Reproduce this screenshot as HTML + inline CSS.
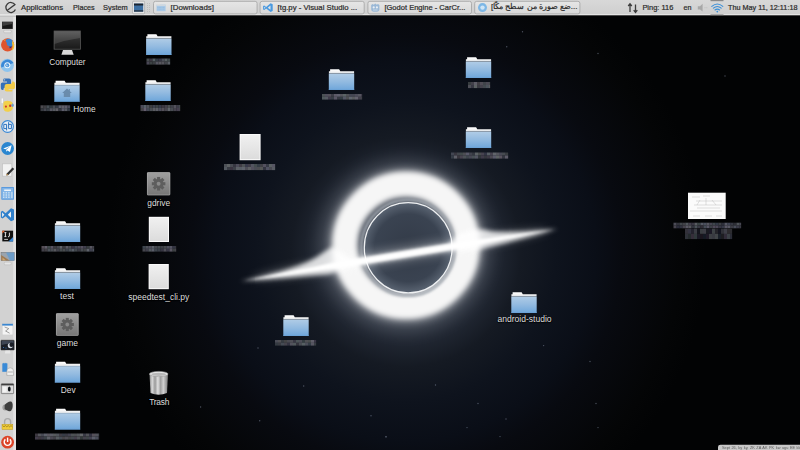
<!DOCTYPE html><html><head><meta charset="utf-8"><style>
html,body{margin:0;padding:0;width:800px;height:450px;overflow:hidden;background:#000;font-family:"Liberation Sans",sans-serif;}
svg{position:absolute;left:0;top:0;}
.t{position:absolute;white-space:nowrap;line-height:1;}
.pt{color:#2a2a2a;-webkit-text-stroke:0.2px #2a2a2a;}
.dl{color:#dedede;text-shadow:0 0 1px #000,0 1px 1px #000;}
</style></head><body>
<svg width="800" height="450" viewBox="0 0 800 450"><defs>
<radialGradient id="sky" cx="406" cy="252" r="300" gradientUnits="userSpaceOnUse">
<stop offset="0" stop-color="#3c4654"/>
<stop offset="0.233" stop-color="#2a313e"/>
<stop offset="0.383" stop-color="#151a23"/>
<stop offset="0.5" stop-color="#0e131d"/>
<stop offset="0.633" stop-color="#0a0e17"/>
<stop offset="0.717" stop-color="#080a10"/>
<stop offset="0.917" stop-color="#040506"/>
<stop offset="1" stop-color="#020304"/>
</radialGradient>
<radialGradient id="disc" cx="408.2" cy="247.8" r="45" gradientUnits="userSpaceOnUse">
<stop offset="0" stop-color="#333b48"/>
<stop offset="0.75" stop-color="#3a4351"/>
<stop offset="1" stop-color="#5a6472"/>
</radialGradient>
<linearGradient id="fold" x1="0" y1="0" x2="0" y2="1">
<stop offset="0" stop-color="#b0cce6"/>
<stop offset="0.5" stop-color="#92bae0"/>
<stop offset="1" stop-color="#6ea6da"/>
</linearGradient>
<linearGradient id="ftop" x1="0" y1="0" x2="0" y2="1">
<stop offset="0" stop-color="#ffffff"/>
<stop offset="0.6" stop-color="#f2f2f2"/>
<stop offset="1" stop-color="#d6dde4"/>
</linearGradient>
<linearGradient id="gear" x1="0" y1="0" x2="0" y2="1">
<stop offset="0" stop-color="#a0a0a0"/>
<stop offset="1" stop-color="#767676"/>
</linearGradient>
<linearGradient id="doc" x1="0" y1="0" x2="0" y2="1">
<stop offset="0" stop-color="#f0f0f0"/>
<stop offset="1" stop-color="#dcdcdc"/>
</linearGradient>
<linearGradient id="can" x1="0" y1="0" x2="1" y2="0">
<stop offset="0" stop-color="#8a8a8a"/>
<stop offset="0.15" stop-color="#d8d8d8"/>
<stop offset="0.3" stop-color="#9a9a9a"/>
<stop offset="0.45" stop-color="#e0e0e0"/>
<stop offset="0.6" stop-color="#a0a0a0"/>
<stop offset="0.75" stop-color="#d0d0d0"/>
<stop offset="1" stop-color="#7a7a7a"/>
</linearGradient>
<linearGradient id="scr" x1="0" y1="0" x2="0" y2="1">
<stop offset="0" stop-color="#4a4a4a"/>
<stop offset="0.5" stop-color="#2c2c2c"/>
<stop offset="1" stop-color="#1a1a1a"/>
</linearGradient>
<filter id="b1" x="-50%" y="-50%" width="200%" height="200%"><feGaussianBlur stdDeviation="1"/></filter>
<filter id="b2" x="-50%" y="-50%" width="200%" height="200%"><feGaussianBlur stdDeviation="2"/></filter>
<filter id="b25" x="-50%" y="-50%" width="200%" height="200%"><feGaussianBlur stdDeviation="2.5"/></filter>
<filter id="b3" x="-50%" y="-50%" width="200%" height="200%"><feGaussianBlur stdDeviation="3"/></filter>
<filter id="b4" x="-50%" y="-50%" width="200%" height="200%"><feGaussianBlur stdDeviation="4"/></filter>
<filter id="b8" x="-50%" y="-50%" width="200%" height="200%"><feGaussianBlur stdDeviation="8"/></filter>
<filter id="b16" x="-50%" y="-50%" width="200%" height="200%"><feGaussianBlur stdDeviation="16"/></filter>
<symbol id="folder" viewBox="0 0 26 21" overflow="visible">
<path d="M1.6 0.2 H10.6 L11.8 2.2 H25.6 V4.6 H0.4 V2.2 H1.6 Z" fill="url(#ftop)"/>
<rect x="0.3" y="4.6" width="25.4" height="16.4" fill="url(#fold)"/>
<rect x="0.3" y="20.4" width="25.4" height="0.6" fill="#6aa0d6"/>
</symbol>
<symbol id="gearico" viewBox="0 0 24 24" overflow="visible">
<rect x="0" y="0" width="24" height="24" rx="1" fill="url(#gear)"/>
<rect x="0.4" y="0.4" width="23.2" height="23.2" rx="1" fill="none" stroke="#b8b8b8" stroke-width="0.6" opacity="0.8"/>
<g transform="translate(12 12)" fill="#5e5e5e">
<circle r="5"/>
<rect x="-1.6" y="-7" width="3.2" height="14"/>
<rect x="-1.6" y="-7" width="3.2" height="14" transform="rotate(45)"/>
<rect x="-1.6" y="-7" width="3.2" height="14" transform="rotate(90)"/>
<rect x="-1.6" y="-7" width="3.2" height="14" transform="rotate(135)"/>
<circle r="2" fill="#8a8a8a"/>
</g>
</symbol>
<symbol id="docico" viewBox="0 0 20 25" overflow="visible">
<rect x="0" y="0" width="20.2" height="25.2" fill="#fafafa"/>
<rect x="1" y="1" width="18.2" height="23.2" fill="url(#doc)"/>
</symbol>
</defs><rect width="800" height="450" fill="url(#sky)"/><circle cx="478" cy="403.5" r="0.7" fill="#8f9ab0" opacity="0.5"/><circle cx="467" cy="427.6" r="0.7" fill="#8f9ab0" opacity="0.5"/><circle cx="506" cy="419" r="0.7" fill="#8f9ab0" opacity="0.5"/><circle cx="590" cy="361.5" r="0.7" fill="#8f9ab0" opacity="0.5"/><circle cx="435.5" cy="385" r="0.7" fill="#8f9ab0" opacity="0.5"/><circle cx="386" cy="436.6" r="0.7" fill="#8f9ab0" opacity="0.5"/><circle cx="500" cy="436.6" r="0.7" fill="#8f9ab0" opacity="0.5"/><circle cx="598" cy="427.6" r="0.7" fill="#8f9ab0" opacity="0.5"/><circle cx="543.6" cy="345.6" r="0.7" fill="#8f9ab0" opacity="0.5"/><circle cx="596" cy="403.5" r="0.7" fill="#8f9ab0" opacity="0.5"/><circle cx="258" cy="348" r="0.7" fill="#8f9ab0" opacity="0.5"/><circle cx="259.7" cy="420.7" r="0.7" fill="#8f9ab0" opacity="0.5"/><circle cx="371" cy="415.8" r="0.7" fill="#8f9ab0" opacity="0.5"/><circle cx="386" cy="437" r="0.7" fill="#8f9ab0" opacity="0.5"/><circle cx="303.7" cy="386" r="0.7" fill="#8f9ab0" opacity="0.5"/><circle cx="200.6" cy="407" r="0.7" fill="#8f9ab0" opacity="0.5"/><circle cx="522.5" cy="31.75" r="0.7" fill="#8f9ab0" opacity="0.5"/><circle cx="506.75" cy="46.75" r="0.7" fill="#8f9ab0" opacity="0.5"/><circle cx="598" cy="53.5" r="0.7" fill="#8f9ab0" opacity="0.5"/><circle cx="725" cy="76" r="0.7" fill="#8f9ab0" opacity="0.5"/><circle cx="405" cy="246" r="68" fill="none" stroke="#c8ccd2" stroke-width="36" opacity="0.2" filter="url(#b8)"/><circle cx="406" cy="245.5" r="61.5" fill="none" stroke="#ffffff" stroke-width="28" opacity="0.55" filter="url(#b4)"/><circle cx="406" cy="245.3" r="61.2" fill="none" stroke="#f6f6f6" stroke-width="23.5" filter="url(#b25)"/><ellipse cx="408.2" cy="247.8" rx="46.6" ry="47.8" fill="none" stroke="#a4aab2" stroke-width="3" opacity="0.8" filter="url(#b1)"/><ellipse cx="408.2" cy="247.8" rx="43.9" ry="45.1" fill="url(#disc)"/><ellipse cx="408.2" cy="247.8" rx="43.9" ry="45.1" fill="none" stroke="#eef0f2" stroke-width="1.3"/><g transform="translate(400 254.4) rotate(-9.2)"><ellipse cx="0" cy="0" rx="150" ry="8" fill="#ffffff" opacity="0.25" filter="url(#b4)"/><path d="M-162 1 C-120 -1 -96 -5 -82 -11 C-76 -14 -70 -17 -64 -18 L-50 -3 L50 -3 L62 -11 Q80 -15 94 -8 Q120 -2 160 0 Q116 5 74 8 L50 4.5 L-50 4.5 L-74 8 Q-116 5 -162 1 Z" fill="#ffffff" opacity="0.8" filter="url(#b2)"/><path d="M-158 1 Q-100 -0.5 -70 -2.4 L70 -2.4 Q110 -1 156 0 Q110 1.6 70 3.4 L-70 3.4 Q-110 2.4 -158 1 Z" fill="#ffffff" filter="url(#b1)"/></g><use href="#folder" x="145.8" y="34" width="26" height="21"/><rect x="146.5" y="58.50" width="3.15" height="3.10" fill="rgb(70,76,78)"/><rect x="149.5" y="58.50" width="3.15" height="3.10" fill="rgb(60,55,67)"/><rect x="152.5" y="58.50" width="3.15" height="3.10" fill="rgb(85,95,98)"/><rect x="155.5" y="58.50" width="3.15" height="3.10" fill="rgb(51,58,66)"/><rect x="158.5" y="58.50" width="3.15" height="3.10" fill="rgb(55,55,70)"/><rect x="161.5" y="58.50" width="3.15" height="3.10" fill="rgb(75,78,88)"/><rect x="164.5" y="58.50" width="3.15" height="3.10" fill="rgb(88,96,98)"/><rect x="167.5" y="58.50" width="2.65" height="3.10" fill="rgb(62,72,74)"/><rect x="146.5" y="61.50" width="3.15" height="3.10" fill="rgb(72,70,84)"/><rect x="149.5" y="61.50" width="3.15" height="3.10" fill="rgb(59,65,67)"/><rect x="152.5" y="61.50" width="3.15" height="3.10" fill="rgb(57,61,65)"/><rect x="155.5" y="61.50" width="3.15" height="3.10" fill="rgb(84,85,96)"/><rect x="158.5" y="61.50" width="3.15" height="3.10" fill="rgb(87,87,94)"/><rect x="161.5" y="61.50" width="3.15" height="3.10" fill="rgb(84,84,91)"/><rect x="164.5" y="61.50" width="3.15" height="3.10" fill="rgb(65,68,74)"/><rect x="167.5" y="61.50" width="2.65" height="3.10" fill="rgb(88,94,101)"/><use href="#folder" x="54" y="80.6" width="26" height="21"/><path d="M67 88.6 L62.2 93 H63.8 V97 H70.2 V93 H71.8 Z" fill="#6a8cac"/><rect x="68.8" y="89" width="1" height="2.4" fill="#6a8cac"/><rect x="40.5" y="105.30" width="3.15" height="2.95" fill="rgb(76,75,80)"/><rect x="43.5" y="105.30" width="3.15" height="2.95" fill="rgb(63,63,67)"/><rect x="46.5" y="105.30" width="3.15" height="2.95" fill="rgb(71,78,85)"/><rect x="49.5" y="105.30" width="3.15" height="2.95" fill="rgb(51,60,65)"/><rect x="52.5" y="105.30" width="3.15" height="2.95" fill="rgb(74,78,86)"/><rect x="55.5" y="105.30" width="3.15" height="2.95" fill="rgb(53,58,69)"/><rect x="58.5" y="105.30" width="3.15" height="2.95" fill="rgb(93,94,106)"/><rect x="61.5" y="105.30" width="3.15" height="2.95" fill="rgb(96,95,105)"/><rect x="64.5" y="105.30" width="3.15" height="2.95" fill="rgb(95,92,107)"/><rect x="67.5" y="105.30" width="2.65" height="2.95" fill="rgb(72,73,87)"/><rect x="40.5" y="108.15" width="3.15" height="2.95" fill="rgb(54,57,63)"/><rect x="43.5" y="108.15" width="3.15" height="2.95" fill="rgb(69,71,80)"/><rect x="46.5" y="108.15" width="3.15" height="2.95" fill="rgb(55,62,69)"/><rect x="49.5" y="108.15" width="3.15" height="2.95" fill="rgb(87,87,99)"/><rect x="52.5" y="108.15" width="3.15" height="2.95" fill="rgb(87,91,98)"/><rect x="55.5" y="108.15" width="3.15" height="2.95" fill="rgb(97,96,103)"/><rect x="58.5" y="108.15" width="3.15" height="2.95" fill="rgb(55,57,66)"/><rect x="61.5" y="108.15" width="3.15" height="2.95" fill="rgb(93,92,107)"/><rect x="64.5" y="108.15" width="3.15" height="2.95" fill="rgb(87,91,99)"/><rect x="67.5" y="108.15" width="2.65" height="2.95" fill="rgb(50,56,66)"/><use href="#folder" x="145" y="80" width="26" height="21"/><rect x="140.5" y="105.00" width="3.15" height="3.10" fill="rgb(76,75,89)"/><rect x="143.5" y="105.00" width="3.15" height="3.10" fill="rgb(87,96,105)"/><rect x="146.5" y="105.00" width="3.15" height="3.10" fill="rgb(79,81,89)"/><rect x="149.5" y="105.00" width="3.15" height="3.10" fill="rgb(61,62,64)"/><rect x="152.5" y="105.00" width="3.15" height="3.10" fill="rgb(61,65,77)"/><rect x="155.5" y="105.00" width="3.15" height="3.10" fill="rgb(59,65,68)"/><rect x="158.5" y="105.00" width="3.15" height="3.10" fill="rgb(54,58,72)"/><rect x="161.5" y="105.00" width="3.15" height="3.10" fill="rgb(59,56,65)"/><rect x="164.5" y="105.00" width="3.15" height="3.10" fill="rgb(67,65,75)"/><rect x="167.5" y="105.00" width="3.15" height="3.10" fill="rgb(75,79,81)"/><rect x="170.5" y="105.00" width="3.15" height="3.10" fill="rgb(62,64,72)"/><rect x="173.5" y="105.00" width="3.15" height="3.10" fill="rgb(82,81,90)"/><rect x="176.5" y="105.00" width="3.15" height="3.10" fill="rgb(59,60,71)"/><rect x="179.5" y="105.00" width="0.65" height="3.10" fill="rgb(94,102,102)"/><rect x="140.5" y="108.00" width="3.15" height="3.10" fill="rgb(69,68,73)"/><rect x="143.5" y="108.00" width="3.15" height="3.10" fill="rgb(100,94,110)"/><rect x="146.5" y="108.00" width="3.15" height="3.10" fill="rgb(68,73,85)"/><rect x="149.5" y="108.00" width="3.15" height="3.10" fill="rgb(73,78,84)"/><rect x="152.5" y="108.00" width="3.15" height="3.10" fill="rgb(90,92,97)"/><rect x="155.5" y="108.00" width="3.15" height="3.10" fill="rgb(91,93,101)"/><rect x="158.5" y="108.00" width="3.15" height="3.10" fill="rgb(76,78,91)"/><rect x="161.5" y="108.00" width="3.15" height="3.10" fill="rgb(84,81,89)"/><rect x="164.5" y="108.00" width="3.15" height="3.10" fill="rgb(72,71,78)"/><rect x="167.5" y="108.00" width="3.15" height="3.10" fill="rgb(97,101,107)"/><rect x="170.5" y="108.00" width="3.15" height="3.10" fill="rgb(72,76,82)"/><rect x="173.5" y="108.00" width="3.15" height="3.10" fill="rgb(69,67,77)"/><rect x="176.5" y="108.00" width="3.15" height="3.10" fill="rgb(68,63,78)"/><rect x="179.5" y="108.00" width="0.65" height="3.10" fill="rgb(94,92,100)"/><use href="#folder" x="328.5" y="69" width="26" height="21"/><rect x="322.0" y="94.00" width="3.15" height="2.85" fill="rgb(75,81,84)"/><rect x="325.0" y="94.00" width="3.15" height="2.85" fill="rgb(80,78,91)"/><rect x="328.0" y="94.00" width="3.15" height="2.85" fill="rgb(83,80,89)"/><rect x="331.0" y="94.00" width="3.15" height="2.85" fill="rgb(60,60,70)"/><rect x="334.0" y="94.00" width="3.15" height="2.85" fill="rgb(92,89,102)"/><rect x="337.0" y="94.00" width="3.15" height="2.85" fill="rgb(95,94,108)"/><rect x="340.0" y="94.00" width="3.15" height="2.85" fill="rgb(85,85,93)"/><rect x="343.0" y="94.00" width="3.15" height="2.85" fill="rgb(90,99,101)"/><rect x="346.0" y="94.00" width="3.15" height="2.85" fill="rgb(78,80,85)"/><rect x="349.0" y="94.00" width="3.15" height="2.85" fill="rgb(67,70,82)"/><rect x="352.0" y="94.00" width="3.15" height="2.85" fill="rgb(68,69,81)"/><rect x="355.0" y="94.00" width="3.15" height="2.85" fill="rgb(76,76,89)"/><rect x="358.0" y="94.00" width="3.15" height="2.85" fill="rgb(85,85,95)"/><rect x="361.0" y="94.00" width="1.15" height="2.85" fill="rgb(64,60,74)"/><rect x="322.0" y="96.75" width="3.15" height="2.85" fill="rgb(80,89,92)"/><rect x="325.0" y="96.75" width="3.15" height="2.85" fill="rgb(86,90,98)"/><rect x="328.0" y="96.75" width="3.15" height="2.85" fill="rgb(64,60,75)"/><rect x="331.0" y="96.75" width="3.15" height="2.85" fill="rgb(56,61,69)"/><rect x="334.0" y="96.75" width="3.15" height="2.85" fill="rgb(90,86,101)"/><rect x="337.0" y="96.75" width="3.15" height="2.85" fill="rgb(54,56,65)"/><rect x="340.0" y="96.75" width="3.15" height="2.85" fill="rgb(51,60,67)"/><rect x="343.0" y="96.75" width="3.15" height="2.85" fill="rgb(83,86,100)"/><rect x="346.0" y="96.75" width="3.15" height="2.85" fill="rgb(76,78,81)"/><rect x="349.0" y="96.75" width="3.15" height="2.85" fill="rgb(96,101,110)"/><rect x="352.0" y="96.75" width="3.15" height="2.85" fill="rgb(89,92,95)"/><rect x="355.0" y="96.75" width="3.15" height="2.85" fill="rgb(100,98,110)"/><rect x="358.0" y="96.75" width="3.15" height="2.85" fill="rgb(67,64,76)"/><rect x="361.0" y="96.75" width="1.15" height="2.85" fill="rgb(61,64,70)"/><use href="#folder" x="465.5" y="57" width="26" height="21"/><rect x="468.0" y="82.00" width="3.15" height="3.10" fill="rgb(55,60,63)"/><rect x="471.0" y="82.00" width="3.15" height="3.10" fill="rgb(65,64,73)"/><rect x="474.0" y="82.00" width="3.15" height="3.10" fill="rgb(94,93,103)"/><rect x="477.0" y="82.00" width="3.15" height="3.10" fill="rgb(63,61,67)"/><rect x="480.0" y="82.00" width="3.15" height="3.10" fill="rgb(80,77,86)"/><rect x="483.0" y="82.00" width="3.15" height="3.10" fill="rgb(64,68,74)"/><rect x="486.0" y="82.00" width="3.15" height="3.10" fill="rgb(75,74,84)"/><rect x="489.0" y="82.00" width="1.15" height="3.10" fill="rgb(69,75,78)"/><rect x="468.0" y="85.00" width="3.15" height="3.10" fill="rgb(77,78,86)"/><rect x="471.0" y="85.00" width="3.15" height="3.10" fill="rgb(55,56,67)"/><rect x="474.0" y="85.00" width="3.15" height="3.10" fill="rgb(91,97,98)"/><rect x="477.0" y="85.00" width="3.15" height="3.10" fill="rgb(58,58,66)"/><rect x="480.0" y="85.00" width="3.15" height="3.10" fill="rgb(68,66,76)"/><rect x="483.0" y="85.00" width="3.15" height="3.10" fill="rgb(67,73,79)"/><rect x="486.0" y="85.00" width="3.15" height="3.10" fill="rgb(75,83,91)"/><rect x="489.0" y="85.00" width="1.15" height="3.10" fill="rgb(91,91,95)"/><use href="#folder" x="465.5" y="127" width="26" height="21"/><rect x="451.0" y="152.50" width="3.15" height="3.10" fill="rgb(65,69,81)"/><rect x="454.0" y="152.50" width="3.15" height="3.10" fill="rgb(56,54,63)"/><rect x="457.0" y="152.50" width="3.15" height="3.10" fill="rgb(65,69,75)"/><rect x="460.0" y="152.50" width="3.15" height="3.10" fill="rgb(65,73,74)"/><rect x="463.0" y="152.50" width="3.15" height="3.10" fill="rgb(77,77,83)"/><rect x="466.0" y="152.50" width="3.15" height="3.10" fill="rgb(89,89,105)"/><rect x="469.0" y="152.50" width="3.15" height="3.10" fill="rgb(64,67,77)"/><rect x="472.0" y="152.50" width="3.15" height="3.10" fill="rgb(53,56,65)"/><rect x="475.0" y="152.50" width="3.15" height="3.10" fill="rgb(92,98,101)"/><rect x="478.0" y="152.50" width="3.15" height="3.10" fill="rgb(73,76,78)"/><rect x="481.0" y="152.50" width="3.15" height="3.10" fill="rgb(70,67,79)"/><rect x="484.0" y="152.50" width="3.15" height="3.10" fill="rgb(50,52,68)"/><rect x="487.0" y="152.50" width="3.15" height="3.10" fill="rgb(86,93,100)"/><rect x="490.0" y="152.50" width="3.15" height="3.10" fill="rgb(70,66,79)"/><rect x="493.0" y="152.50" width="3.15" height="3.10" fill="rgb(97,100,106)"/><rect x="496.0" y="152.50" width="3.15" height="3.10" fill="rgb(84,85,93)"/><rect x="499.0" y="152.50" width="3.15" height="3.10" fill="rgb(72,73,85)"/><rect x="502.0" y="152.50" width="3.15" height="3.10" fill="rgb(70,74,80)"/><rect x="505.0" y="152.50" width="3.15" height="3.10" fill="rgb(56,60,64)"/><rect x="451.0" y="155.50" width="3.15" height="3.10" fill="rgb(52,59,69)"/><rect x="454.0" y="155.50" width="3.15" height="3.10" fill="rgb(94,95,104)"/><rect x="457.0" y="155.50" width="3.15" height="3.10" fill="rgb(57,54,62)"/><rect x="460.0" y="155.50" width="3.15" height="3.10" fill="rgb(72,67,79)"/><rect x="463.0" y="155.50" width="3.15" height="3.10" fill="rgb(76,81,86)"/><rect x="466.0" y="155.50" width="3.15" height="3.10" fill="rgb(63,69,76)"/><rect x="469.0" y="155.50" width="3.15" height="3.10" fill="rgb(72,72,85)"/><rect x="472.0" y="155.50" width="3.15" height="3.10" fill="rgb(73,81,86)"/><rect x="475.0" y="155.50" width="3.15" height="3.10" fill="rgb(83,85,98)"/><rect x="478.0" y="155.50" width="3.15" height="3.10" fill="rgb(49,54,59)"/><rect x="481.0" y="155.50" width="3.15" height="3.10" fill="rgb(63,59,73)"/><rect x="484.0" y="155.50" width="3.15" height="3.10" fill="rgb(53,55,62)"/><rect x="487.0" y="155.50" width="3.15" height="3.10" fill="rgb(61,57,69)"/><rect x="490.0" y="155.50" width="3.15" height="3.10" fill="rgb(75,72,82)"/><rect x="493.0" y="155.50" width="3.15" height="3.10" fill="rgb(89,89,105)"/><rect x="496.0" y="155.50" width="3.15" height="3.10" fill="rgb(94,98,100)"/><rect x="499.0" y="155.50" width="3.15" height="3.10" fill="rgb(89,83,94)"/><rect x="502.0" y="155.50" width="3.15" height="3.10" fill="rgb(53,55,65)"/><rect x="505.0" y="155.50" width="3.15" height="3.10" fill="rgb(93,91,104)"/><use href="#folder" x="54.5" y="221" width="26" height="21"/><rect x="41.5" y="246.00" width="3.15" height="2.85" fill="rgb(84,78,86)"/><rect x="44.5" y="246.00" width="3.15" height="2.85" fill="rgb(96,93,105)"/><rect x="47.5" y="246.00" width="3.15" height="2.85" fill="rgb(64,73,75)"/><rect x="50.5" y="246.00" width="3.15" height="2.85" fill="rgb(88,83,98)"/><rect x="53.5" y="246.00" width="3.15" height="2.85" fill="rgb(59,58,63)"/><rect x="56.5" y="246.00" width="3.15" height="2.85" fill="rgb(67,69,77)"/><rect x="59.5" y="246.00" width="3.15" height="2.85" fill="rgb(96,98,105)"/><rect x="62.5" y="246.00" width="3.15" height="2.85" fill="rgb(59,58,62)"/><rect x="65.5" y="246.00" width="3.15" height="2.85" fill="rgb(90,90,99)"/><rect x="68.5" y="246.00" width="3.15" height="2.85" fill="rgb(73,75,81)"/><rect x="71.5" y="246.00" width="3.15" height="2.85" fill="rgb(55,50,65)"/><rect x="74.5" y="246.00" width="3.15" height="2.85" fill="rgb(66,70,82)"/><rect x="77.5" y="246.00" width="3.15" height="2.85" fill="rgb(74,72,83)"/><rect x="80.5" y="246.00" width="3.15" height="2.85" fill="rgb(84,80,95)"/><rect x="83.5" y="246.00" width="3.15" height="2.85" fill="rgb(64,63,77)"/><rect x="86.5" y="246.00" width="3.15" height="2.85" fill="rgb(53,58,60)"/><rect x="89.5" y="246.00" width="3.15" height="2.85" fill="rgb(87,86,96)"/><rect x="92.5" y="246.00" width="1.65" height="2.85" fill="rgb(64,64,72)"/><rect x="41.5" y="248.75" width="3.15" height="2.85" fill="rgb(65,63,72)"/><rect x="44.5" y="248.75" width="3.15" height="2.85" fill="rgb(64,62,67)"/><rect x="47.5" y="248.75" width="3.15" height="2.85" fill="rgb(74,80,88)"/><rect x="50.5" y="248.75" width="3.15" height="2.85" fill="rgb(73,77,83)"/><rect x="53.5" y="248.75" width="3.15" height="2.85" fill="rgb(86,87,93)"/><rect x="56.5" y="248.75" width="3.15" height="2.85" fill="rgb(63,64,73)"/><rect x="59.5" y="248.75" width="3.15" height="2.85" fill="rgb(69,75,78)"/><rect x="62.5" y="248.75" width="3.15" height="2.85" fill="rgb(73,76,79)"/><rect x="65.5" y="248.75" width="3.15" height="2.85" fill="rgb(60,66,74)"/><rect x="68.5" y="248.75" width="3.15" height="2.85" fill="rgb(72,79,87)"/><rect x="71.5" y="248.75" width="3.15" height="2.85" fill="rgb(86,92,101)"/><rect x="74.5" y="248.75" width="3.15" height="2.85" fill="rgb(65,71,76)"/><rect x="77.5" y="248.75" width="3.15" height="2.85" fill="rgb(55,55,64)"/><rect x="80.5" y="248.75" width="3.15" height="2.85" fill="rgb(71,75,80)"/><rect x="83.5" y="248.75" width="3.15" height="2.85" fill="rgb(65,68,70)"/><rect x="86.5" y="248.75" width="3.15" height="2.85" fill="rgb(94,98,106)"/><rect x="89.5" y="248.75" width="3.15" height="2.85" fill="rgb(62,63,77)"/><rect x="92.5" y="248.75" width="1.65" height="2.85" fill="rgb(78,82,93)"/><use href="#folder" x="54.5" y="268" width="26" height="21"/><use href="#folder" x="54.5" y="361.5" width="26" height="21"/><use href="#folder" x="54.5" y="408.5" width="26" height="21"/><rect x="35.0" y="433.50" width="3.15" height="3.10" fill="rgb(59,55,63)"/><rect x="38.0" y="433.50" width="3.15" height="3.10" fill="rgb(84,85,92)"/><rect x="41.0" y="433.50" width="3.15" height="3.10" fill="rgb(71,73,83)"/><rect x="44.0" y="433.50" width="3.15" height="3.10" fill="rgb(92,95,106)"/><rect x="47.0" y="433.50" width="3.15" height="3.10" fill="rgb(89,86,95)"/><rect x="50.0" y="433.50" width="3.15" height="3.10" fill="rgb(91,92,102)"/><rect x="53.0" y="433.50" width="3.15" height="3.10" fill="rgb(87,90,93)"/><rect x="56.0" y="433.50" width="3.15" height="3.10" fill="rgb(81,85,92)"/><rect x="59.0" y="433.50" width="3.15" height="3.10" fill="rgb(64,61,69)"/><rect x="62.0" y="433.50" width="3.15" height="3.10" fill="rgb(55,60,71)"/><rect x="65.0" y="433.50" width="3.15" height="3.10" fill="rgb(58,58,68)"/><rect x="68.0" y="433.50" width="3.15" height="3.10" fill="rgb(67,66,80)"/><rect x="71.0" y="433.50" width="3.15" height="3.10" fill="rgb(78,82,85)"/><rect x="74.0" y="433.50" width="3.15" height="3.10" fill="rgb(76,79,82)"/><rect x="77.0" y="433.50" width="3.15" height="3.10" fill="rgb(83,86,91)"/><rect x="80.0" y="433.50" width="3.15" height="3.10" fill="rgb(99,101,104)"/><rect x="83.0" y="433.50" width="3.15" height="3.10" fill="rgb(57,58,69)"/><rect x="86.0" y="433.50" width="3.15" height="3.10" fill="rgb(80,81,87)"/><rect x="89.0" y="433.50" width="3.15" height="3.10" fill="rgb(51,51,65)"/><rect x="92.0" y="433.50" width="3.15" height="3.10" fill="rgb(85,80,89)"/><rect x="95.0" y="433.50" width="3.15" height="3.10" fill="rgb(81,82,90)"/><rect x="98.0" y="433.50" width="1.15" height="3.10" fill="rgb(64,68,75)"/><rect x="35.0" y="436.50" width="3.15" height="3.10" fill="rgb(65,60,74)"/><rect x="38.0" y="436.50" width="3.15" height="3.10" fill="rgb(61,55,63)"/><rect x="41.0" y="436.50" width="3.15" height="3.10" fill="rgb(59,58,70)"/><rect x="44.0" y="436.50" width="3.15" height="3.10" fill="rgb(60,66,72)"/><rect x="47.0" y="436.50" width="3.15" height="3.10" fill="rgb(93,95,103)"/><rect x="50.0" y="436.50" width="3.15" height="3.10" fill="rgb(75,72,83)"/><rect x="53.0" y="436.50" width="3.15" height="3.10" fill="rgb(67,66,74)"/><rect x="56.0" y="436.50" width="3.15" height="3.10" fill="rgb(86,91,96)"/><rect x="59.0" y="436.50" width="3.15" height="3.10" fill="rgb(71,77,86)"/><rect x="62.0" y="436.50" width="3.15" height="3.10" fill="rgb(71,68,73)"/><rect x="65.0" y="436.50" width="3.15" height="3.10" fill="rgb(78,76,84)"/><rect x="68.0" y="436.50" width="3.15" height="3.10" fill="rgb(67,68,71)"/><rect x="71.0" y="436.50" width="3.15" height="3.10" fill="rgb(67,72,79)"/><rect x="74.0" y="436.50" width="3.15" height="3.10" fill="rgb(69,64,77)"/><rect x="77.0" y="436.50" width="3.15" height="3.10" fill="rgb(79,82,87)"/><rect x="80.0" y="436.50" width="3.15" height="3.10" fill="rgb(52,58,59)"/><rect x="83.0" y="436.50" width="3.15" height="3.10" fill="rgb(68,66,75)"/><rect x="86.0" y="436.50" width="3.15" height="3.10" fill="rgb(63,69,73)"/><rect x="89.0" y="436.50" width="3.15" height="3.10" fill="rgb(68,67,81)"/><rect x="92.0" y="436.50" width="3.15" height="3.10" fill="rgb(89,92,104)"/><rect x="95.0" y="436.50" width="3.15" height="3.10" fill="rgb(74,78,90)"/><rect x="98.0" y="436.50" width="1.15" height="3.10" fill="rgb(54,53,63)"/><use href="#folder" x="283" y="315" width="26" height="21"/><rect x="275.0" y="340.00" width="3.15" height="2.85" fill="rgb(74,76,86)"/><rect x="278.0" y="340.00" width="3.15" height="2.85" fill="rgb(80,80,84)"/><rect x="281.0" y="340.00" width="3.15" height="2.85" fill="rgb(55,60,66)"/><rect x="284.0" y="340.00" width="3.15" height="2.85" fill="rgb(67,68,69)"/><rect x="287.0" y="340.00" width="3.15" height="2.85" fill="rgb(73,74,82)"/><rect x="290.0" y="340.00" width="3.15" height="2.85" fill="rgb(78,79,86)"/><rect x="293.0" y="340.00" width="3.15" height="2.85" fill="rgb(57,56,68)"/><rect x="296.0" y="340.00" width="3.15" height="2.85" fill="rgb(75,84,87)"/><rect x="299.0" y="340.00" width="3.15" height="2.85" fill="rgb(77,78,88)"/><rect x="302.0" y="340.00" width="3.15" height="2.85" fill="rgb(53,62,66)"/><rect x="305.0" y="340.00" width="3.15" height="2.85" fill="rgb(79,80,84)"/><rect x="308.0" y="340.00" width="3.15" height="2.85" fill="rgb(73,77,78)"/><rect x="311.0" y="340.00" width="3.15" height="2.85" fill="rgb(94,93,104)"/><rect x="314.0" y="340.00" width="2.15" height="2.85" fill="rgb(56,52,67)"/><rect x="275.0" y="342.75" width="3.15" height="2.85" fill="rgb(52,58,65)"/><rect x="278.0" y="342.75" width="3.15" height="2.85" fill="rgb(57,59,66)"/><rect x="281.0" y="342.75" width="3.15" height="2.85" fill="rgb(69,75,84)"/><rect x="284.0" y="342.75" width="3.15" height="2.85" fill="rgb(69,67,76)"/><rect x="287.0" y="342.75" width="3.15" height="2.85" fill="rgb(52,52,66)"/><rect x="290.0" y="342.75" width="3.15" height="2.85" fill="rgb(83,83,93)"/><rect x="293.0" y="342.75" width="3.15" height="2.85" fill="rgb(81,88,91)"/><rect x="296.0" y="342.75" width="3.15" height="2.85" fill="rgb(52,52,61)"/><rect x="299.0" y="342.75" width="3.15" height="2.85" fill="rgb(73,77,83)"/><rect x="302.0" y="342.75" width="3.15" height="2.85" fill="rgb(87,96,99)"/><rect x="305.0" y="342.75" width="3.15" height="2.85" fill="rgb(75,78,89)"/><rect x="308.0" y="342.75" width="3.15" height="2.85" fill="rgb(52,61,70)"/><rect x="311.0" y="342.75" width="3.15" height="2.85" fill="rgb(87,86,98)"/><rect x="314.0" y="342.75" width="2.15" height="2.85" fill="rgb(55,60,65)"/><use href="#folder" x="511" y="292" width="26" height="21"/><use href="#gearico" x="147" y="172" width="23.2" height="23.5"/><use href="#gearico" x="56" y="313" width="22.6" height="23"/><use href="#docico" x="148.8" y="216.8" width="20" height="25"/><rect x="142.5" y="246.00" width="3.15" height="2.85" fill="rgb(62,69,78)"/><rect x="145.5" y="246.00" width="3.15" height="2.85" fill="rgb(78,81,88)"/><rect x="148.5" y="246.00" width="3.15" height="2.85" fill="rgb(81,79,92)"/><rect x="151.5" y="246.00" width="3.15" height="2.85" fill="rgb(91,96,104)"/><rect x="154.5" y="246.00" width="3.15" height="2.85" fill="rgb(69,72,79)"/><rect x="157.5" y="246.00" width="3.15" height="2.85" fill="rgb(67,73,77)"/><rect x="160.5" y="246.00" width="3.15" height="2.85" fill="rgb(62,64,71)"/><rect x="163.5" y="246.00" width="3.15" height="2.85" fill="rgb(69,73,77)"/><rect x="166.5" y="246.00" width="3.15" height="2.85" fill="rgb(77,78,91)"/><rect x="169.5" y="246.00" width="3.15" height="2.85" fill="rgb(84,84,98)"/><rect x="172.5" y="246.00" width="3.15" height="2.85" fill="rgb(51,52,67)"/><rect x="175.5" y="246.00" width="0.65" height="2.85" fill="rgb(69,69,72)"/><rect x="142.5" y="248.75" width="3.15" height="2.85" fill="rgb(69,69,76)"/><rect x="145.5" y="248.75" width="3.15" height="2.85" fill="rgb(63,63,75)"/><rect x="148.5" y="248.75" width="3.15" height="2.85" fill="rgb(82,89,94)"/><rect x="151.5" y="248.75" width="3.15" height="2.85" fill="rgb(90,93,105)"/><rect x="154.5" y="248.75" width="3.15" height="2.85" fill="rgb(61,68,76)"/><rect x="157.5" y="248.75" width="3.15" height="2.85" fill="rgb(57,62,71)"/><rect x="160.5" y="248.75" width="3.15" height="2.85" fill="rgb(53,52,65)"/><rect x="163.5" y="248.75" width="3.15" height="2.85" fill="rgb(79,78,88)"/><rect x="166.5" y="248.75" width="3.15" height="2.85" fill="rgb(55,54,69)"/><rect x="169.5" y="248.75" width="3.15" height="2.85" fill="rgb(90,86,99)"/><rect x="172.5" y="248.75" width="3.15" height="2.85" fill="rgb(60,64,66)"/><rect x="175.5" y="248.75" width="0.65" height="2.85" fill="rgb(96,91,100)"/><use href="#docico" x="148.6" y="264" width="20" height="25"/><use href="#docico" x="239.5" y="134" width="21" height="26"/><rect x="224.0" y="164.00" width="3.15" height="3.10" fill="rgb(77,81,87)"/><rect x="227.0" y="164.00" width="3.15" height="3.10" fill="rgb(94,98,100)"/><rect x="230.0" y="164.00" width="3.15" height="3.10" fill="rgb(72,75,83)"/><rect x="233.0" y="164.00" width="3.15" height="3.10" fill="rgb(54,54,65)"/><rect x="236.0" y="164.00" width="3.15" height="3.10" fill="rgb(76,75,89)"/><rect x="239.0" y="164.00" width="3.15" height="3.10" fill="rgb(64,61,69)"/><rect x="242.0" y="164.00" width="3.15" height="3.10" fill="rgb(78,82,85)"/><rect x="245.0" y="164.00" width="3.15" height="3.10" fill="rgb(56,58,74)"/><rect x="248.0" y="164.00" width="3.15" height="3.10" fill="rgb(63,60,72)"/><rect x="251.0" y="164.00" width="3.15" height="3.10" fill="rgb(82,84,95)"/><rect x="254.0" y="164.00" width="3.15" height="3.10" fill="rgb(68,76,78)"/><rect x="257.0" y="164.00" width="3.15" height="3.10" fill="rgb(53,60,69)"/><rect x="260.0" y="164.00" width="3.15" height="3.10" fill="rgb(64,64,70)"/><rect x="263.0" y="164.00" width="3.15" height="3.10" fill="rgb(83,80,94)"/><rect x="266.0" y="164.00" width="3.15" height="3.10" fill="rgb(55,58,69)"/><rect x="269.0" y="164.00" width="3.15" height="3.10" fill="rgb(90,96,99)"/><rect x="272.0" y="164.00" width="3.15" height="3.10" fill="rgb(87,86,100)"/><rect x="224.0" y="167.00" width="3.15" height="3.10" fill="rgb(83,89,96)"/><rect x="227.0" y="167.00" width="3.15" height="3.10" fill="rgb(57,60,68)"/><rect x="230.0" y="167.00" width="3.15" height="3.10" fill="rgb(58,52,65)"/><rect x="233.0" y="167.00" width="3.15" height="3.10" fill="rgb(61,64,73)"/><rect x="236.0" y="167.00" width="3.15" height="3.10" fill="rgb(92,96,102)"/><rect x="239.0" y="167.00" width="3.15" height="3.10" fill="rgb(88,93,101)"/><rect x="242.0" y="167.00" width="3.15" height="3.10" fill="rgb(95,99,108)"/><rect x="245.0" y="167.00" width="3.15" height="3.10" fill="rgb(78,78,86)"/><rect x="248.0" y="167.00" width="3.15" height="3.10" fill="rgb(94,96,100)"/><rect x="251.0" y="167.00" width="3.15" height="3.10" fill="rgb(83,80,93)"/><rect x="254.0" y="167.00" width="3.15" height="3.10" fill="rgb(74,76,85)"/><rect x="257.0" y="167.00" width="3.15" height="3.10" fill="rgb(76,77,81)"/><rect x="260.0" y="167.00" width="3.15" height="3.10" fill="rgb(84,86,86)"/><rect x="263.0" y="167.00" width="3.15" height="3.10" fill="rgb(52,53,65)"/><rect x="266.0" y="167.00" width="3.15" height="3.10" fill="rgb(81,82,98)"/><rect x="269.0" y="167.00" width="3.15" height="3.10" fill="rgb(74,74,83)"/><rect x="272.0" y="167.00" width="3.15" height="3.10" fill="rgb(88,92,99)"/><rect x="53.7" y="30.6" width="27.1" height="19" fill="#5a5a5a"/><rect x="54.5" y="31.4" width="25.5" height="17.4" fill="url(#scr)"/><path d="M54.5 31.4 H80 V38 Q66 40 54.5 44 Z" fill="#ffffff" opacity="0.12"/><path d="M63 50 H72 L73.7 54.7 H61.4 Z" fill="#d8d8d8"/><path d="M149.5 374 Q158.7 370 168 374 L167 393 Q158.7 396.5 150.5 393 Z" fill="url(#can)"/><ellipse cx="158.7" cy="374" rx="9.3" ry="2.6" fill="#e8e8e8" stroke="#9a9a9a" stroke-width="0.6"/><ellipse cx="158.7" cy="374.3" rx="7.5" ry="1.6" fill="#b8b8b8"/><rect x="688" y="192.7" width="37.7" height="26.3" fill="#fbfbfb"/><g stroke="#b4b4b4" stroke-width="0.4" fill="none"><path d="M692 197 H700 M703 196 H710 M696 201 H722 M694 205 H722 M697 208 H720 M690 211 H722 M693 216 H700 M705 216 H712 M716 216 H722"/><path d="M700 200 L697 205 M712 200 L716 205 M706 198 V205"/></g><rect x="673.5" y="222.70" width="3.15" height="2.85" fill="rgb(75,75,86)"/><rect x="676.5" y="222.70" width="3.15" height="2.85" fill="rgb(49,50,58)"/><rect x="679.5" y="222.70" width="3.15" height="2.85" fill="rgb(64,69,74)"/><rect x="682.5" y="222.70" width="3.15" height="2.85" fill="rgb(64,65,71)"/><rect x="685.5" y="222.70" width="3.15" height="2.85" fill="rgb(81,87,92)"/><rect x="688.5" y="222.70" width="3.15" height="2.85" fill="rgb(65,62,75)"/><rect x="691.5" y="222.70" width="3.15" height="2.85" fill="rgb(57,55,67)"/><rect x="694.5" y="222.70" width="3.15" height="2.85" fill="rgb(88,91,97)"/><rect x="697.5" y="222.70" width="3.15" height="2.85" fill="rgb(57,66,68)"/><rect x="700.5" y="222.70" width="3.15" height="2.85" fill="rgb(85,89,100)"/><rect x="703.5" y="222.70" width="3.15" height="2.85" fill="rgb(74,79,93)"/><rect x="706.5" y="222.70" width="3.15" height="2.85" fill="rgb(86,87,96)"/><rect x="709.5" y="222.70" width="3.15" height="2.85" fill="rgb(69,68,81)"/><rect x="712.5" y="222.70" width="3.15" height="2.85" fill="rgb(62,70,76)"/><rect x="715.5" y="222.70" width="3.15" height="2.85" fill="rgb(51,57,71)"/><rect x="718.5" y="222.70" width="3.15" height="2.85" fill="rgb(60,63,68)"/><rect x="721.5" y="222.70" width="3.15" height="2.85" fill="rgb(45,46,58)"/><rect x="724.5" y="222.70" width="3.15" height="2.85" fill="rgb(85,87,99)"/><rect x="727.5" y="222.70" width="3.15" height="2.85" fill="rgb(63,67,82)"/><rect x="730.5" y="222.70" width="3.15" height="2.85" fill="rgb(54,56,66)"/><rect x="733.5" y="222.70" width="3.15" height="2.85" fill="rgb(45,46,53)"/><rect x="736.5" y="222.70" width="3.15" height="2.85" fill="rgb(78,83,88)"/><rect x="739.5" y="222.70" width="1.65" height="2.85" fill="rgb(70,70,81)"/><rect x="673.5" y="225.45" width="3.15" height="2.85" fill="rgb(70,67,77)"/><rect x="676.5" y="225.45" width="3.15" height="2.85" fill="rgb(43,44,59)"/><rect x="679.5" y="225.45" width="3.15" height="2.85" fill="rgb(47,50,62)"/><rect x="682.5" y="225.45" width="3.15" height="2.85" fill="rgb(69,67,77)"/><rect x="685.5" y="225.45" width="3.15" height="2.85" fill="rgb(89,88,100)"/><rect x="688.5" y="225.45" width="3.15" height="2.85" fill="rgb(86,87,93)"/><rect x="691.5" y="225.45" width="3.15" height="2.85" fill="rgb(50,52,62)"/><rect x="694.5" y="225.45" width="3.15" height="2.85" fill="rgb(74,82,88)"/><rect x="697.5" y="225.45" width="3.15" height="2.85" fill="rgb(57,57,68)"/><rect x="700.5" y="225.45" width="3.15" height="2.85" fill="rgb(48,45,54)"/><rect x="703.5" y="225.45" width="3.15" height="2.85" fill="rgb(69,76,86)"/><rect x="706.5" y="225.45" width="3.15" height="2.85" fill="rgb(87,85,101)"/><rect x="709.5" y="225.45" width="3.15" height="2.85" fill="rgb(60,65,71)"/><rect x="712.5" y="225.45" width="3.15" height="2.85" fill="rgb(78,72,88)"/><rect x="715.5" y="225.45" width="3.15" height="2.85" fill="rgb(74,70,86)"/><rect x="718.5" y="225.45" width="3.15" height="2.85" fill="rgb(54,54,67)"/><rect x="721.5" y="225.45" width="3.15" height="2.85" fill="rgb(54,57,71)"/><rect x="724.5" y="225.45" width="3.15" height="2.85" fill="rgb(88,86,100)"/><rect x="727.5" y="225.45" width="3.15" height="2.85" fill="rgb(88,88,100)"/><rect x="730.5" y="225.45" width="3.15" height="2.85" fill="rgb(60,61,69)"/><rect x="733.5" y="225.45" width="3.15" height="2.85" fill="rgb(72,76,88)"/><rect x="736.5" y="225.45" width="3.15" height="2.85" fill="rgb(58,59,72)"/><rect x="739.5" y="225.45" width="1.65" height="2.85" fill="rgb(58,59,67)"/><rect x="685.0" y="228.70" width="3.15" height="5.25" fill="rgb(50,49,57)"/><rect x="688.0" y="228.70" width="3.15" height="5.25" fill="rgb(51,51,65)"/><rect x="691.0" y="228.70" width="3.15" height="5.25" fill="rgb(36,35,46)"/><rect x="694.0" y="228.70" width="3.15" height="5.25" fill="rgb(58,59,67)"/><rect x="697.0" y="228.70" width="3.15" height="5.25" fill="rgb(20,21,29)"/><rect x="700.0" y="228.70" width="3.15" height="5.25" fill="rgb(59,62,67)"/><rect x="703.0" y="228.70" width="3.15" height="5.25" fill="rgb(62,62,70)"/><rect x="706.0" y="228.70" width="3.15" height="5.25" fill="rgb(26,27,34)"/><rect x="709.0" y="228.70" width="3.15" height="5.25" fill="rgb(27,25,38)"/><rect x="712.0" y="228.70" width="3.15" height="5.25" fill="rgb(61,66,69)"/><rect x="715.0" y="228.70" width="3.15" height="5.25" fill="rgb(36,36,42)"/><rect x="718.0" y="228.70" width="3.15" height="5.25" fill="rgb(20,21,32)"/><rect x="721.0" y="228.70" width="3.15" height="5.25" fill="rgb(49,50,57)"/><rect x="724.0" y="228.70" width="3.15" height="5.25" fill="rgb(62,63,72)"/><rect x="727.0" y="228.70" width="3.15" height="5.25" fill="rgb(45,43,47)"/><rect x="730.0" y="228.70" width="2.15" height="5.25" fill="rgb(44,44,48)"/><rect x="685.0" y="233.85" width="3.15" height="5.25" fill="rgb(46,49,56)"/><rect x="688.0" y="233.85" width="3.15" height="5.25" fill="rgb(36,42,44)"/><rect x="691.0" y="233.85" width="3.15" height="5.25" fill="rgb(53,46,58)"/><rect x="694.0" y="233.85" width="3.15" height="5.25" fill="rgb(48,56,59)"/><rect x="697.0" y="233.85" width="3.15" height="5.25" fill="rgb(27,25,37)"/><rect x="700.0" y="233.85" width="3.15" height="5.25" fill="rgb(26,21,30)"/><rect x="703.0" y="233.85" width="3.15" height="5.25" fill="rgb(21,26,36)"/><rect x="706.0" y="233.85" width="3.15" height="5.25" fill="rgb(31,26,39)"/><rect x="709.0" y="233.85" width="3.15" height="5.25" fill="rgb(60,63,67)"/><rect x="712.0" y="233.85" width="3.15" height="5.25" fill="rgb(56,58,65)"/><rect x="715.0" y="233.85" width="3.15" height="5.25" fill="rgb(65,69,72)"/><rect x="718.0" y="233.85" width="3.15" height="5.25" fill="rgb(26,32,41)"/><rect x="721.0" y="233.85" width="3.15" height="5.25" fill="rgb(29,29,33)"/><rect x="724.0" y="233.85" width="3.15" height="5.25" fill="rgb(49,44,57)"/><rect x="727.0" y="233.85" width="3.15" height="5.25" fill="rgb(59,64,70)"/><rect x="730.0" y="233.85" width="2.15" height="5.25" fill="rgb(41,43,53)"/><path d="M718 450 V447 Q718 444.8 720.5 444.8 H800 V450 Z" fill="#c8c8c8"/></svg>
<div class="t dl" style="left:49.2px;top:57.6px;font-size:8.3px;">Computer</div>
<div class="t dl" style="left:73.3px;top:105px;font-size:8.4px;">Home</div>
<div class="t dl" style="left:147.3px;top:198.6px;font-size:8.4px;">gdrive</div>
<div class="t dl" style="left:60px;top:292.2px;font-size:8.6px;">test</div>
<div class="t dl" style="left:128.3px;top:292.6px;font-size:8.5px;">speedtest_cli.py</div>
<div class="t dl" style="left:56.7px;top:339.4px;font-size:8.5px;">game</div>
<div class="t dl" style="left:60.8px;top:385.6px;font-size:8.3px;">Dev</div>
<div class="t dl" style="left:149.2px;top:397.6px;font-size:8.4px;letter-spacing:-0.25px">Trash</div>
<div class="t dl" style="left:497.4px;top:315.2px;font-size:8.55px;">android-studio</div>
<svg width="800" height="16" viewBox="0 0 800 16"><defs>
<linearGradient id="pan" x1="0" y1="0" x2="0" y2="1">
<stop offset="0" stop-color="#d8d8d8"/><stop offset="1" stop-color="#cfcfcf"/></linearGradient>
<linearGradient id="btn" x1="0" y1="0" x2="0" y2="1">
<stop offset="0" stop-color="#e6e6e6"/><stop offset="1" stop-color="#d8d8d8"/></linearGradient>
</defs><rect x="16" width="784" height="16" fill="#3a3a3a"/><rect width="16" height="16" fill="#d6d6d6"/><rect width="800" height="14" fill="url(#pan)"/><rect y="14" width="800" height="1.1" fill="#e4e4e4"/><path d="M7 10.4 L15 4.63 A5 5 0 1 0 15.43 9.61" fill="none" stroke="#3a3a3a" stroke-width="1.25"/><rect x="132.6" y="1.2" width="12" height="12.6" rx="1" fill="#e6e6e6" stroke="#a6a6a6" stroke-width="0.7"/><rect x="134" y="3.6" width="9.2" height="8" fill="#3d6fa3"/><rect x="134" y="3.6" width="9.2" height="1.9" fill="#1c2430"/><rect x="134" y="10.3" width="9.2" height="1.3" fill="#24303c"/><path d="M147.5 3 V12 M149.5 3 V12" stroke="#b0b0b0" stroke-width="0.6" stroke-dasharray="1 1"/><rect x="153.5" y="1.3" width="103.60000000000002" height="12.6" rx="2" fill="url(#btn)" stroke="#a8a8a8" stroke-width="0.9"/><rect x="260.1" y="1.3" width="104.09999999999997" height="12.6" rx="2" fill="url(#btn)" stroke="#a8a8a8" stroke-width="0.9"/><rect x="367.9" y="1.3" width="103.60000000000002" height="12.6" rx="2" fill="url(#btn)" stroke="#a8a8a8" stroke-width="0.9"/><rect x="474.7" y="1.3" width="105.19999999999999" height="12.6" rx="2" fill="url(#btn)" stroke="#a8a8a8" stroke-width="0.9"/><rect x="156.6" y="4.6" width="9" height="6.6" fill="#a8c8e6"/><path d="M156.8 4 H160 L160.6 4.8 H165.4 V5.8 H156.8 Z" fill="#dcdcdc"/><path d="M157.5 7.5 H164.8 M157.5 9.2 H164.8" stroke="#8ab4dc" stroke-width="0.6" stroke-dasharray="0.8 0.6"/><path d="M270.6 3.3 L272.7 4.2 V11.1 L270.6 12 L266.2 8.6 L264.2 10.1 L263.1 9.5 V6 L264.2 5.4 L266.2 6.9 Z" fill="#4a9ae0"/><path d="M270.5 5.6 V9.7 L267.8 7.65 Z" fill="#e4e4e4"/><path d="M264.1 6.7 L265.5 7.75 L264.1 8.8 Z" fill="#e4e4e4"/><path d="M371.2 5 L372.6 4 L373.8 4.8 L375.3 3.4 L376.8 4.8 L378 4 L379.4 5 V9.4 Q379.4 11.6 375.3 11.8 Q371.2 11.6 371.2 9.4 Z" fill="#9ab8d6"/><circle cx="373.7" cy="7.4" r="1.1" fill="#e8eef4"/><circle cx="376.9" cy="7.4" r="1.1" fill="#e8eef4"/><path d="M373 10 H377.6" stroke="#e8eef4" stroke-width="0.6"/><circle cx="482.5" cy="7.6" r="4.5" fill="#7db7e6"/><circle cx="482.5" cy="7.6" r="2.2" fill="#cfe5f6"/><path d="M630 12 V4 M628.2 6 L630 3.8 L631.8 6" stroke="#3c3c3c" stroke-width="1.3" fill="none"/><path d="M635.5 4.5 V12.2 M633.7 10.2 L635.5 12.4 L637.3 10.2" stroke="#3c3c3c" stroke-width="1.3" fill="none"/><path d="M697.8 6.2 H700 L702.6 3.8 V11.6 L700 9.4 H697.8 Z" fill="#a8a8a8"/><path d="M704.5 7.7 H707.8" stroke="#bcbcbc" stroke-width="0.8" stroke-dasharray="1 0.8"/><rect x="710.5" y="0" width="13" height="1.2" fill="#8a8a8a"/><rect x="710.5" y="14.6" width="13" height="1.4" fill="#555"/><g fill="none" stroke="#3a8fd8" stroke-width="1.1" stroke-linecap="round"><path d="M711.8 6.3 Q717.3 1.6 722.8 6.3"/><path d="M713.4 8.2 Q717.3 4.9 721.2 8.2"/><path d="M715.0 10 Q717.3 8.2 719.6 10"/></g><circle cx="717.3" cy="11.6" r="0.9" fill="#3a8fd8"/></svg>
<div class="t pt" style="left:21px;top:3.6px;font-size:7.8px;">Applications</div>
<div class="t pt" style="left:73px;top:3.6px;font-size:7.2px;">Places</div>
<div class="t pt" style="left:103px;top:3.6px;font-size:7.45px;">System</div>
<div class="t pt" style="left:170.5px;top:3.6px;font-size:7.9px;">[Downloads]</div>
<div class="t pt" style="left:277.6px;top:3.6px;font-size:7.75px;">[tg.py - Visual Studio ...</div>
<div class="t pt" style="left:384.4px;top:3.6px;font-size:7.55px;">[Godot Engine - CarCr...</div>
<div class="t pt" style="left:491px;top:3.2px;font-size:7.8px;direction:ltr">[<span dir="rtl">ضع صورة من سطح مكًا</span>...</div>
<div class="t pt" style="left:642.4px;top:3.6px;font-size:7.45px;">Ping: 116</div>
<div class="t pt" style="left:683.6px;top:3.6px;font-size:7.2px;">en</div>
<div class="t pt" style="left:728px;top:3.6px;font-size:7.25px;">Thu May 11, 12:11:18</div>
<svg width="16" height="450" viewBox="0 0 16 450" style="top:0"><rect x="0" y="16" width="16" height="434" fill="#d2d2d2"/><rect x="13.2" y="16" width="2.8" height="434" fill="#e2e2e2"/><rect x="0" y="16" width="16" height="0.8" fill="#c0c0c0"/><rect x="2" y="21.6" width="10.8" height="7.4" fill="#3a3a3a"/><rect x="2.5" y="22.1" width="9.8" height="6.4" fill="#161616"/><path d="M2.5 22.1 H12.3 V24 Q7 24.8 2.5 26 Z" fill="#3c3c3c"/><path d="M4.2 30.2 H10.8 Q12 31.5 10.8 32.8 H4.2 Q3 31.5 4.2 30.2 Z" fill="#e4e4e4" stroke="#a8a8a8" stroke-width="0.4"/><rect x="6" y="29" width="3" height="1.2" fill="#c8c8c8"/><circle cx="7.6" cy="44.8" r="6.6" fill="#e0542c"/><circle cx="8.8" cy="43.2" r="4.4" fill="#3a86d0"/><path d="M3.4 40.8 Q4.6 39.2 6 39.4 L5.6 41.2 Q7.2 42 6.8 44.2 Q7.6 46.4 10 46.6 Q8 48.4 5.4 47.2 Q3.2 45.4 3.4 40.8 Z" fill="#e0542c"/><path d="M12.4 40.6 Q15 44 14 48 Q13.2 50 11.4 50.8 Q13.4 46.6 12 43.4 Z" fill="#f4c032"/><path d="M4 40.2 Q4.6 39.4 5.6 39.4 L5 40.8 Z" fill="#f6d040"/><path d="M9.4 46.4 Q11 46.8 12 46.2 Q11.4 48.2 9.8 48.4 Z" fill="#3a2a6a"/><circle cx="7.3" cy="65.3" r="6.6" fill="#8ec4ee"/><path d="M7.3 65.3 L1.2 67.4 A6.6 6.6 0 0 1 13.5 63 Z" fill="#3a88d6"/><circle cx="7.3" cy="65.3" r="3" fill="#eef6fc"/><circle cx="7.3" cy="65.3" r="2" fill="#4a94da"/><path d="M6.6 64.4 V65.8 H8" stroke="#e6f2fc" stroke-width="0.6" fill="none"/><path d="M4 78.6 H9 Q11 78.6 11 80.6 V85 Q11 87.4 8.8 87.4 H5.4 Q3.4 87.4 3.4 89.4 V90 H2.4 Q0.8 90 0.8 87 V84 Q0.8 82.4 2.6 82.4 H7 V81.6 H3.2 V80.4 Q3.2 78.6 4 78.6 Z" fill="#3470b8"/><path d="M11.8 91.6 H6.8 Q4.6 91.6 4.6 89.6 V86 Q4.6 84 6.8 84 H10.2 Q12.2 84 12.2 82 V81.6 H13.2 Q15 81.6 15 84.6 V87.6 Q15 89.2 13.2 89.2 H8.6 V90 H12.4 V90.8 Q12.4 91.6 11.8 91.6 Z" fill="#f2cc4a"/><circle cx="4.6" cy="79.8" r="0.6" fill="#ddd"/><path d="M3.4 104 Q3 101 6 101 Q8 100.4 11 101.6 Q13.6 103 13 107 Q12.6 110.6 9.4 111.6 Q6 112.4 4.2 110.4 Q2.6 108.2 3.4 104 Z" fill="#f2d04a"/><circle cx="5.9" cy="106.6" r="1.1" fill="#d2382a"/><circle cx="10.2" cy="105.7" r="1.2" fill="#d2382a"/><path d="M2.3 99 V102.6" stroke="#f8f8f8" stroke-width="1.4" stroke-linecap="round"/><ellipse cx="12.6" cy="105.2" rx="1.2" ry="1.8" fill="#6c9ccc"/><circle cx="7.6" cy="126.5" r="6.4" fill="#3c8ad6"/><circle cx="7.6" cy="126.5" r="5.2" fill="#e6eef6"/><path d="M3.8 124.4 H6.6 V130.4 M3.8 124.4 V128.6 H6.6 M8.6 122.2 V128.6 H11.4 V124.4 H8.6" stroke="#2e72bc" stroke-width="1" fill="none"/><circle cx="7.6" cy="148.5" r="6.4" fill="#2a86d0"/><path d="M3.2 148.6 L11.6 145.2 L10 152 L7.4 150.4 L6.2 151.8 V149.8 L10.6 146 L5.6 149.3 Z" fill="#ffffff"/><rect x="2.6" y="163.9" width="9.2" height="12.2" fill="#f2f2f2" stroke="#b8b8b8" stroke-width="0.5"/><path d="M6.8 173.4 L12.6 167.4 L14.2 169 L8.4 175 L6.4 175.6 Z" fill="#303030"/><path d="M6.8 173.4 L6.4 175.6 L8.4 175 Z" fill="#d09a50"/><rect x="1.3" y="187" width="12.7" height="12.7" rx="0.6" fill="#5a9ade"/><rect x="2.2" y="188" width="10.9" height="10.8" fill="#84b6e8"/><rect x="4.2" y="189.5" width="6.8" height="1.5" fill="#eef4fa"/><rect x="3.0" y="192.2" width="1.4" height="1.2" fill="#d8e8f6"/><rect x="5.6" y="192.2" width="1.4" height="1.2" fill="#d8e8f6"/><rect x="8.2" y="192.2" width="1.4" height="1.2" fill="#d8e8f6"/><rect x="3.0" y="194.4" width="1.4" height="1.2" fill="#d8e8f6"/><rect x="5.6" y="194.4" width="1.4" height="1.2" fill="#d8e8f6"/><rect x="8.2" y="194.4" width="1.4" height="1.2" fill="#d8e8f6"/><rect x="3.0" y="196.6" width="1.4" height="1.2" fill="#d8e8f6"/><rect x="5.6" y="196.6" width="1.4" height="1.2" fill="#d8e8f6"/><rect x="8.2" y="196.6" width="1.4" height="1.2" fill="#d8e8f6"/><rect x="11.4" y="192" width="1" height="6" fill="#d8e8f6"/><path d="M11 208.2 L14 209.6 V220 L11 221.3 L5.6 216.2 L2.6 218.6 L0.9 217.6 V211.8 L2.6 210.8 L5.6 213.2 Z" fill="#2f80cc"/><path d="M2.1 212.2 L4.3 214.7 L2.1 217.2 Z" fill="#f4f4f4"/><path d="M11 211.6 V217.8 L7.8 214.7 Z" fill="#f4f4f4"/><rect x="2.3" y="230.7" width="10.8" height="10.7" fill="#101010"/><path d="M2.3 230.7 H5 L2.3 233.4 Z" fill="#f06a30"/><path d="M13.1 237 V241.4 H8.5 Z" fill="#3a8ad8"/><path d="M4.4 232.6 H6.4 M5.4 232.6 V236.6 M4.4 236.6 H6.4 M9.4 232.6 V236 Q9.4 236.8 8 236.8" stroke="#f4f4f4" stroke-width="0.9" fill="none"/><path d="M4.2 239.4 H8" stroke="#f4f4f4" stroke-width="0.8"/><rect x="1" y="252.2" width="13.4" height="8.6" fill="#9aa4ae" stroke="#6a6a6a" stroke-width="0.4"/><path d="M6 252.4 L14.2 252.4 L14.2 260.6 L10 260.6 Z" fill="#6c9cc8"/><path d="M1.2 255 L9.5 260.6 H1.2 Z" fill="#a07a50"/><path d="M2.5 257.5 L6 260.6 H2.5 Z" fill="#c8a878"/><path d="M4.6 262.2 H10.8 Q11.6 263.5 10.8 264.8 H4.6 Q3.8 263.5 4.6 262.2 Z" fill="#e6e6e6" stroke="#a0a0a0" stroke-width="0.3"/><rect x="2.2" y="323.8" width="10.7" height="11.1" fill="#f4f4f4" stroke="#c8c8c8" stroke-width="0.4"/><rect x="2.2" y="323.8" width="10.7" height="1.8" fill="#3a86d0"/><path d="M4.6 327 L8.8 328.6 L5.6 331 L9.6 333.2" stroke="#8a8a8a" stroke-width="0.8" fill="none"/><rect x="0.9" y="340.2" width="13.3" height="9.8" rx="0.6" fill="#1a1e26" stroke="#3a3a3a" stroke-width="0.5"/><path d="M1.6 341 H13.6 V343.6 Q7 343 1.6 345 Z" fill="#3e4654"/><circle cx="10.4" cy="345.6" r="2.6" fill="#d8dee6"/><circle cx="11.6" cy="344.8" r="2.2" fill="#1a1e26"/><circle cx="3.6" cy="347.4" r="0.5" fill="#3a8ad8"/><circle cx="6" cy="348" r="0.5" fill="#3a8ad8"/><path d="M5.4 350.6 H10 L10.6 353.5 H4.8 Z" fill="#e6e6e6"/><path d="M2.1 363.4 L4 362.7 Q4.9 363.6 5.8 362.7 L7.6 363.4 V372 H2.1 Z" fill="#3a8ad6" stroke="#d0d0d0" stroke-width="0.4"/><path d="M6.8 375.4 V371.4 Q6.8 367.8 10.2 367.8 Q13.6 367.8 13.6 371.4 V375.4 Z" fill="#f0f0f0" stroke="#909090" stroke-width="0.5"/><rect x="7.5" y="371.5" width="5.4" height="1" fill="#b0b0b0"/><rect x="1.3" y="383.8" width="12.3" height="9.8" rx="0.5" fill="#dcdcdc" stroke="#555" stroke-width="0.6"/><rect x="1.3" y="383.8" width="12.3" height="1.6" fill="#3e3e3e"/><ellipse cx="9.3" cy="389" rx="1.4" ry="2.6" fill="#101418"/><rect x="2.6" y="386.6" width="4" height="5.6" fill="#f2f2f2"/><ellipse cx="5.2" cy="407.6" rx="2.8" ry="3" fill="#9e9e9e"/><path d="M4.6 405 Q8.6 400.6 11.2 401.6 Q13.4 403.2 12.4 408.2 Q11.4 411.6 9 411.2 Q6.4 410.6 4.6 409 Z" fill="#3e3e3e"/><path d="M4.6 424.6 V421.4 Q4.6 418.6 7.6 418.6 Q10.6 418.6 10.6 421.4 V424.6" stroke="#a8a8a8" stroke-width="1.4" fill="none"/><rect x="2" y="424.2" width="10.8" height="5.4" fill="#f0cc3a" stroke="#b09020" stroke-width="0.4"/><path d="M2.6 425.6 L4 426.8 L5.4 425.6 L6.8 426.8 L8.2 425.6 L9.6 426.8 L11 425.6 L12.4 426.8" stroke="#8a7018" stroke-width="0.7" fill="none"/><circle cx="7.6" cy="442.2" r="6.4" fill="#dc4428"/><path d="M5.4 439.4 A3.4 3.4 0 1 0 9.8 439.4" stroke="#fff" stroke-width="1.4" fill="none"/><path d="M7.6 437.6 V442" stroke="#fff" stroke-width="1.4"/></svg>
<div class="t" style="left:721.5px;top:446px;font-size:8px;color:#5a5a5a;word-spacing:1px;transform:scale(0.48,0.55);transform-origin:0 0">Sept 26, ky ky, ZK ZA AK PK kw ugu EE kk ZE kk</div>
</body></html>
